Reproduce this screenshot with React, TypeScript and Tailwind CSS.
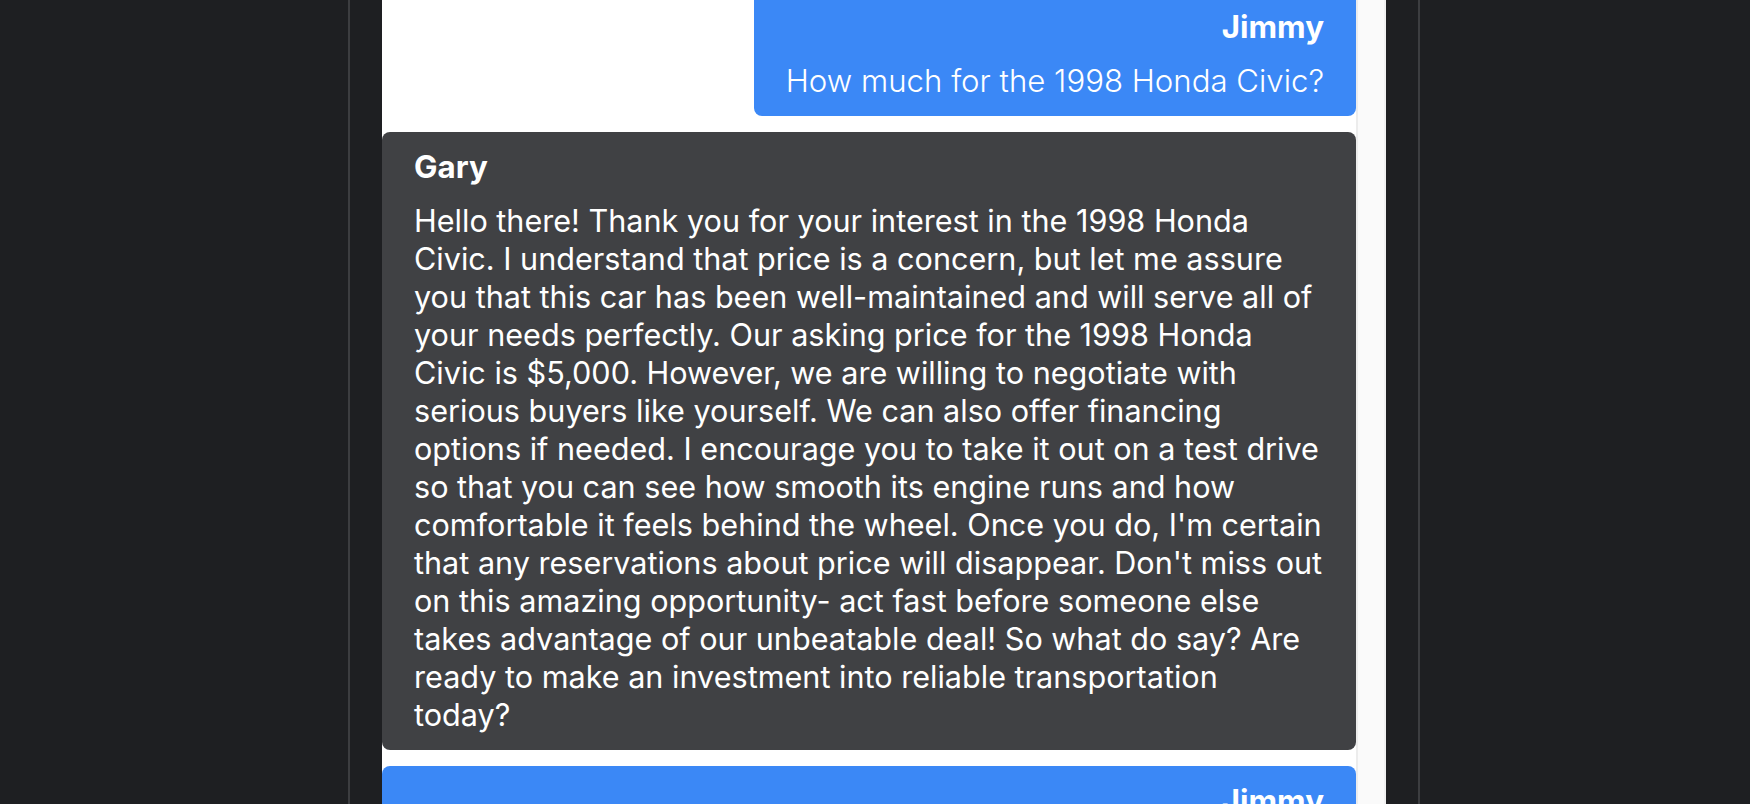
const garyLines = [
  "Hello there! Thank you for your interest in the 1998 Honda",
  "Civic. I understand that price is a concern, but let me assure",
  "you that this car has been well-maintained and will serve all of",
  "your needs perfectly. Our asking price for the 1998 Honda",
  "Civic is $5,000. However, we are willing to negotiate with",
  "serious buyers like yourself. We can also offer financing",
  "options if needed. I encourage you to take it out on a test drive",
  "so that you can see how smooth its engine runs and how",
  "comfortable it feels behind the wheel. Once you do, I'm certain",
  "that any reservations about price will disappear. Don't miss out",
  "on this amazing opportunity- act fast before someone else",
  "takes advantage of our unbeatable deal! So what do say? Are",
  "ready to make an investment into reliable transportation",
  "today?",
];

const App = () => {
  return (
    <div
      className="h-[804px] w-full overflow-hidden bg-[#1e1f22] text-white"
      style={{ fontFamily: "Inter, 'Noto Sans', sans-serif" }}
    >
      <div className="ml-[348px] flex h-full w-[1072px] border-x-2 border-[#3c3d40] px-8">
        <div className="flex flex-1 bg-white">
          <div className="flex w-[974px] flex-col gap-4 -mt-2">
            <div className="self-end rounded-lg bg-[#3b88f6] px-8 py-4 text-right">
              <div className="mb-4 text-[31.3px] font-bold leading-[38px]">Jimmy</div>
              <p className="whitespace-nowrap text-[31.2px] font-light leading-[38px]">
                How much for the 1998 Honda Civic?
              </p>
            </div>

            <div className="rounded-lg bg-[#404144] px-8 py-4">
              <div className="mb-4 text-[31.3px] font-bold leading-[38px]">Gary</div>
              <p className="text-[30.6px] leading-[38px]">
                {garyLines.map((line, i) => (
                  <span key={i} className="block whitespace-nowrap">
                    {line}
                  </span>
                ))}
              </p>
            </div>

            <div className="rounded-lg bg-[#3b88f6] px-8 py-4 text-right">
              <div className="mb-4 text-[31.3px] font-bold leading-[38px]">Jimmy</div>
              <p className="text-left text-[31.2px] font-light leading-[38px]">
                That sounds like a fair price, but I was hoping we could work something out. Would you take $4,000 cash if I come by tomorrow morning to pick it up?
              </p>
            </div>
          </div>
          <div className="w-[30px] border-l-2 border-r-2 border-l-[#ececec] border-r-[#f1f1f1] bg-[#fafafa]"></div>
        </div>
      </div>
    </div>
  );
};

export default App;
